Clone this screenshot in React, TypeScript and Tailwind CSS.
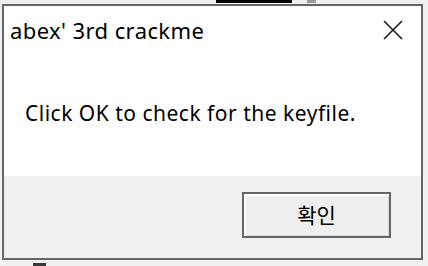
import React from "react";

const CloseIcon = () => (
  <svg width="20" height="20" viewBox="0 0 20 20" className="block">
    <path d="M1 1 L19 19 M19 1 L1 19" stroke="#1a1a1a" strokeWidth="1.6" fill="none" />
  </svg>
);

export default function App() {
  return (
    <div
      className="flex h-[266px] w-[428px] flex-col overflow-hidden bg-[#f0f0f0] text-black"
      style={{ fontFamily: '"Noto Sans", "Noto Sans CJK KR", sans-serif' }}
    >
      <div className="flex h-[4px] shrink-0">
        <div className="ml-[216px] h-[3px] w-[76px] bg-black" />
        <div className="ml-[15px] h-[3px] w-[9px] bg-[#9a9a9a]" />
      </div>

      <div className="ml-[2px] flex h-[256px] w-[421px] shrink-0 flex-col border-2 border-[#666666]">
        <div className="flex h-[170px] flex-col bg-white">
          <div className="flex items-start justify-between pl-[6px] pr-[18px] pt-[10px]">
            <span className="text-[22px] leading-[28px] tracking-[0.4px]">abex' 3rd crackme</span>
            <div className="pt-[4px]">
              <CloseIcon />
            </div>
          </div>
          <p className="mt-[56px] pl-[21px] text-[21px] leading-[26px] tracking-[0.5px]">
            Click OK to check for the keyfile.
          </p>
        </div>
        <div className="flex flex-1 justify-end bg-[#f0f0f0] pr-[30px] pt-[16px]">
          <button className="h-[46px] w-[149px] border-2 border-[#666666] bg-[#efefef] shadow-[inset_2px_2px_0_#ffffff,inset_-1px_-1px_0_#d8d8d8] text-[21px] leading-none">
            확인
          </button>
        </div>
      </div>

      <div className="flex h-[6px] shrink-0 items-end">
        <div className="ml-[33px] h-[3px] w-[13px] bg-[#3a3a3a]" />
      </div>
    </div>
  );
}
